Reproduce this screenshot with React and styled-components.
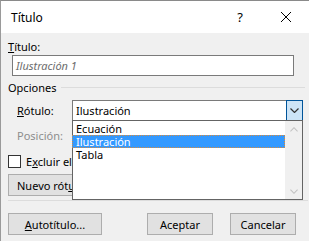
import styled, { createGlobalStyle } from "styled-components";

const Global = createGlobalStyle`
  html, body {
    margin: 0;
    padding: 0;
    background: #3b6d9c;
  }
  * {
    box-sizing: border-box;
  }
`;

const Window = styled.div`
  position: relative;
  width: 309px;
  height: 241px;
  background: #f0f0f0;
  border-top: 1px solid #8a8a8a;
  border-left: 1px solid #9a9a9a;
  font-family: "Noto Sans", "Open Sans", sans-serif;
  font-size: 11px;
  color: #000;
  display: flex;
  flex-direction: column;
  overflow: hidden;
`;

const TitleBar = styled.div`
  height: 32px;
  background: #fff;
  display: flex;
  align-items: center;
  padding-left: 10px;
  font-size: 12px;
`;

const TitleText = styled.div`
  flex: 1;
`;

const TitleButton = styled.div`
  width: ${(p) => p.w}px;
  display: flex;
  justify-content: center;
  align-items: center;
  font-size: 13px;
`;

const Body = styled.div`
  padding: 7px 7px 0 7px;
  display: flex;
  flex-direction: column;
`;

const Label = styled.div`
  height: 14px;
  line-height: 14px;
  color: ${(p) => (p.disabled ? "#8d8d8d" : "#000")};
`;

const TextInput = styled.div`
  margin: 1px 0 0 4px;
  width: 282px;
  height: 21px;
  background: #fff;
  border: 1px solid #7a7a7a;
  padding-left: 3px;
  display: flex;
  align-items: center;
  font-style: italic;
  color: #6d6d6d;
`;

const Group = styled.div`
  margin-top: 4px;
  display: flex;
  align-items: center;
  gap: 5px;
  height: 14px;
`;

const GroupLine = styled.div`
  flex: 1;
  height: 1px;
  background: #dcdcdc;
  margin-right: -3px;
`;

const Row = styled.div`
  display: flex;
  align-items: center;
  margin-top: ${(p) => p.mt}px;
  padding-left: 9px;
`;

const RowLabel = styled(Label)`
  width: 55px;
`;

const Combo = styled.div`
  width: 231px;
  height: 21px;
  background: #fff;
  border: 1px solid #7a7a7a;
  display: flex;
  align-items: center;
  padding-left: 3px;
  margin-right: -3px;
`;

const ComboText = styled.div`
  flex: 1;
`;

const ComboButton = styled.div`
  width: 17px;
  height: 21px;
  margin: -1px -1px -1px 0;
  background: #cce4f7;
  border: 1px solid #005499;
  display: flex;
  align-items: center;
  justify-content: center;
`;

const CheckRow = styled.div`
  display: flex;
  align-items: center;
  gap: 5px;
  margin-top: 11px;
`;

const Box = styled.div`
  width: 13px;
  height: 13px;
  background: #fff;
  border: 1px solid #333;
`;

const CheckLabel = styled.div`
  white-space: nowrap;
`;

const Button = styled.div`
  width: ${(p) => p.w}px;
  height: 22px;
  background: #e1e1e1;
  border: 1px solid #adadad;
  display: flex;
  align-items: center;
  justify-content: ${(p) => (p.left ? "flex-start" : "center")};
  padding-left: ${(p) => (p.left ? 8 : 0)}px;
  white-space: nowrap;
`;

const Separator = styled.div`
  height: 1px;
  background: #dcdcdc;
  margin: 4px -6px 12px 0;
`;

const ButtonRow = styled.div`
  display: flex;
  align-items: center;
  gap: 17px;
  margin-top: ${(p) => p.mt || 0}px;
  padding-right: 6px;
`;

const Spacer = styled.div`
  flex: 1;
`;

const DropList = styled.div`
  position: absolute;
  left: 71px;
  top: 119px;
  width: 231px;
  height: 80px;
  background: #fff;
  border: 1px solid #646464;
  display: flex;
`;

const Items = styled.div`
  flex: 1;
  padding-top: 1px;
`;

const Item = styled.div`
  height: 13px;
  line-height: 12px;
  padding-left: 3px;
  background: ${(p) => (p.selected ? "#3399ff" : "transparent")};
  color: ${(p) => (p.selected ? "#fff" : "#000")};
  border: 1px dotted ${(p) => (p.selected ? "#d98a3a" : "transparent")};
  margin-left: -1px;
`;

const ScrollBar = styled.div`
  width: 17px;
  background: #f0f0f0;
  display: flex;
  flex-direction: column;
  justify-content: space-between;
  align-items: center;
  padding: 6px 0 5px;
`;

const Chevron = ({ up, color = "#333", w = 9, h = 5 }) => (
  <svg width={w} height={h} viewBox="0 0 9 5">
    <path
      d={up ? "M0.5 4.5 L4.5 0.5 L8.5 4.5" : "M0.5 0.5 L4.5 4.5 L8.5 0.5"}
      stroke={color}
      strokeWidth="1.2"
      fill="none"
    />
  </svg>
);

const U = styled.span`
  text-decoration: underline;
  text-underline-offset: 1px;
`;

export default function App() {
  return (
    <Window>
      <Global />
      <TitleBar>
        <TitleText>Título</TitleText>
        <TitleButton w={46}>?</TitleButton>
        <TitleButton w={46}>
          <svg width="10" height="10" viewBox="0 0 10 10">
            <path d="M0 0 L10 10 M10 0 L0 10" stroke="#000" strokeWidth="1" />
          </svg>
        </TitleButton>
      </TitleBar>
      <Body>
        <Label>
          <U>T</U>ítulo:
        </Label>
        <TextInput>Ilustración 1</TextInput>
        <Group>
          Opciones
          <GroupLine />
        </Group>
        <Row mt={6}>
          <RowLabel>
            <U>R</U>ótulo:
          </RowLabel>
          <Combo>
            <ComboText>Ilustración</ComboText>
            <ComboButton>
              <Chevron />
            </ComboButton>
          </Combo>
        </Row>
        <Row mt={8}>
          <RowLabel disabled>Posición:</RowLabel>
        </Row>
        <CheckRow>
          <Box />
          <CheckLabel>
            E<U>x</U>cluir el
          </CheckLabel>
        </CheckRow>
        <ButtonRow mt={5}>
          <Button w={110} left>
            Nuevo rót<U>u</U>
          </Button>
        </ButtonRow>
        <Separator />
        <ButtonRow>
          <Button w={94}>
            <U>A</U>utotítulo...
          </Button>
          <Spacer />
          <Button w={66}>Aceptar</Button>
          <Button w={66}>Cancelar</Button>
        </ButtonRow>
      </Body>
      <DropList>
        <Items>
          <Item>Ecuación</Item>
          <Item selected>Ilustración</Item>
          <Item>Tabla</Item>
        </Items>
        <ScrollBar>
          <Chevron up color="#c2c2c2" w={8} h={5} />
          <Chevron color="#c2c2c2" w={8} h={5} />
        </ScrollBar>
      </DropList>
    </Window>
  );
}
